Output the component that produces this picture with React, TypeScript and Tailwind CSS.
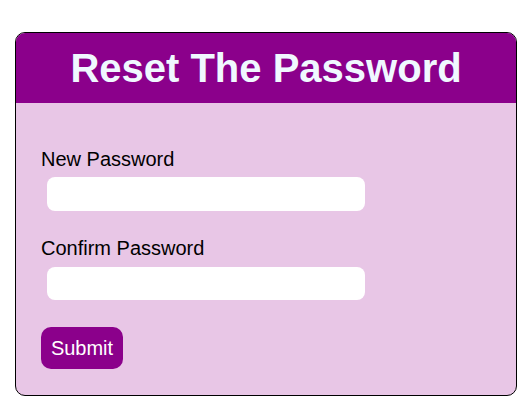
import React from 'react';

const App: React.FC = () => {
  return (
    <div className="min-h-screen bg-white pt-[32px] pl-[15px]" style={{ fontFamily: '"Liberation Sans", Arial, sans-serif' }}>
      <div className="w-[502px] h-[364px] border border-black rounded-[10px] overflow-hidden bg-[#e8c6e6] flex flex-col">
        <div className="bg-[#8b008b] h-[70px] flex items-center justify-center">
          <h1 className="text-[40px] font-bold text-[#f0f8ff] leading-none">Reset The Password</h1>
        </div>
        <form className="flex flex-col px-[25px] pt-[45px]" onSubmit={(e) => e.preventDefault()}>
          <label className="text-[20px] leading-[23px] text-black">New Password</label>
          <input type="password" className="mt-[6px] ml-[6px] w-[318px] h-[34px] rounded-[8px] bg-white outline-none px-2" />
          <label className="mt-[26px] text-[20px] leading-[23px] text-black">Confirm Password</label>
          <input type="password" className="mt-[7px] ml-[6px] w-[318px] h-[33px] rounded-[8px] bg-white outline-none px-2" />
          <button type="submit" className="mt-[27px] self-start w-[82px] h-[42px] rounded-[10px] bg-[#8b008b] text-white text-[20px]">
            Submit
          </button>
        </form>
      </div>
    </div>
  );
};

export default App;
